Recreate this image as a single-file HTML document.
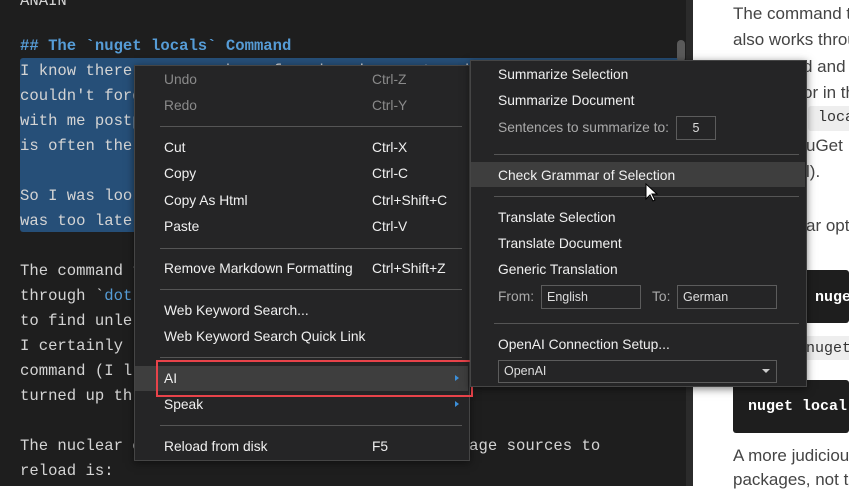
<!DOCTYPE html>
<html><head><meta charset="utf-8"><style>
*{margin:0;padding:0;box-sizing:border-box}
body{width:849px;height:486px;overflow:hidden;background:#fff;position:relative;font-family:"Liberation Sans",sans-serif}
#ed{position:absolute;left:0;top:0;width:693px;height:486px;background:#1e1e1e;overflow:hidden}
#track{position:absolute;left:686px;top:0;width:7px;height:486px;background:#2b2b2b}
#thumb{position:absolute;left:677px;top:40px;width:8px;height:22px;background:#5a5a5a;border-radius:4px}
.l{position:absolute;left:20px;font-family:"Liberation Mono",monospace;font-size:15.6px;color:#d4d4d4;white-space:pre;line-height:25px}
.sel{position:absolute;left:20px;top:58px;width:660px;height:174px;background:#264f78;border-radius:3px}
.h{color:#569cd6;font-weight:bold}
.menu{position:absolute;background:#252526;border:1px solid #454545;box-shadow:0 2px 8px rgba(0,0,0,.5)}
.mi{position:absolute;font-size:13.8px;color:#f0f0f0;white-space:nowrap;line-height:16px}
.dis{color:#8a8a8a}
.sep{position:absolute;height:1px;background:#555}
.box{position:absolute;border:1px solid #5c5c5c;font-size:12.5px;color:#ddd;padding-left:5px;line-height:22px}
#pv{position:absolute;left:693px;top:0;width:156px;height:486px;background:#fff}
.p{position:absolute;font-size:17px;color:#444;white-space:nowrap;line-height:20px}
</style></head><body>
<div id="ed">
<div class="sel"></div>
<div class="l" style="top:-11px">ANAIN</div>
<div class="l h" style="top:34px">## The `nuget locals` Command</div>
<div class="l" style="top:59px">I know there are a number of caches in nuget and I</div>
<div class="l" style="top:84px">couldn't forget the folder name to clear them</div>
<div class="l" style="top:109px">with me postposting this here as a reminder since it</div>
<div class="l" style="top:134px">is often the thing that I need when all else fails.</div>
<div class="l" style="top:184px">So I was looking for a command to clear caches but it</div>
<div class="l" style="top:209px">was too late</div>
<div class="l" style="top:259px">The command t</div>
<div class="l" style="top:284px">through `<span style="color:#569cd6">dot</span></div>
<div class="l" style="top:309px">to find unle</div>
<div class="l" style="top:334px">I certainly </div>
<div class="l" style="top:359px">command (I l</div>
<div class="l" style="top:384px">turned up th</div>
<div class="l" style="top:434px">The nuclear option to clears all caches and package sources to</div>
<div class="l" style="top:459px">reload is:</div>
<div id="track"></div><div id="thumb"></div>
</div>
<div id="pv"></div>
<div class="p" style="top:4px;left:733px">The command that</div>
<div class="p" style="top:30px;left:733px">also works through</div>
<div class="p" style="top:57px;left:803px">d and</div>
<div class="p" style="top:83px;left:803px">or in the</div>
<div style="position:absolute;left:808px;top:106px;width:45px;height:25px;background:#eee;border-radius:3px"></div>
<div class="p" style="top:108px;left:818px;font-family:'Liberation Mono',monospace;font-size:15px;color:#333">loca</div>
<div class="p" style="top:136px;left:806px">uGet</div>
<div class="p" style="top:162px;left:806px">l).</div>
<div class="p" style="top:216px;left:806px">ar opt</div>
<div style="position:absolute;left:733px;top:270px;width:116px;height:53px;background:#1e1e1e;border-radius:3px"></div>
<div class="p" style="top:288px;left:815px;font-family:'Liberation Mono',monospace;color:#fff;font-weight:bold;font-size:15px">nuget</div>
<div style="position:absolute;left:800px;top:336px;width:49px;height:24px;background:#eee"></div>
<div class="p" style="top:339px;left:806px;font-family:'Liberation Mono',monospace;font-size:15px;color:#333">nuget</div>
<div style="position:absolute;left:733px;top:380px;width:116px;height:53px;background:#1e1e1e;border-radius:3px"></div>
<div class="p" style="top:397px;left:748px;font-family:'Liberation Mono',monospace;color:#fff;font-weight:bold;font-size:15px">nuget local</div>
<div class="p" style="top:446px;left:733px">A more judicious</div>
<div class="p" style="top:470px;left:733px">packages, not the</div>

<div class="menu" style="left:134px;top:65px;width:336px;height:396px"></div>
<div style="position:absolute;left:135px;top:366px;width:333px;height:25px;background:#3e3e3e"></div>
<div class="mi dis" style="left:164px;top:72px">Undo</div><div class="mi dis" style="left:372px;top:72px">Ctrl-Z</div>
<div class="mi dis" style="left:164px;top:98px">Redo</div><div class="mi dis" style="left:372px;top:98px">Ctrl-Y</div>
<div class="sep" style="left:160px;top:126px;width:302px"></div>
<div class="mi" style="left:164px;top:140px">Cut</div><div class="mi" style="left:372px;top:140px">Ctrl-X</div>
<div class="mi" style="left:164px;top:166px">Copy</div><div class="mi" style="left:372px;top:166px">Ctrl-C</div>
<div class="mi" style="left:164px;top:193px">Copy As Html</div><div class="mi" style="left:372px;top:193px">Ctrl+Shift+C</div>
<div class="mi" style="left:164px;top:219px">Paste</div><div class="mi" style="left:372px;top:219px">Ctrl-V</div>
<div class="sep" style="left:160px;top:248px;width:302px"></div>
<div class="mi" style="left:164px;top:261px">Remove Markdown Formatting</div><div class="mi" style="left:372px;top:261px">Ctrl+Shift+Z</div>
<div class="sep" style="left:160px;top:289px;width:302px"></div>
<div class="mi" style="left:164px;top:303px">Web Keyword Search...</div>
<div class="mi" style="left:164px;top:329px">Web Keyword Search Quick Link</div>
<div class="sep" style="left:160px;top:357px;width:302px"></div>
<div class="mi" style="left:164px;top:371px">AI</div>
<div class="mi" style="left:164px;top:397px">Speak</div>
<svg style="position:absolute;left:454px;top:374px" width="6" height="8"><path d="M1 1L5 4L1 7Z" fill="#3c8fd9"/></svg>
<svg style="position:absolute;left:454px;top:400px" width="6" height="8"><path d="M1 1L5 4L1 7Z" fill="#3c8fd9"/></svg>
<div class="sep" style="left:160px;top:425px;width:302px"></div>
<div class="mi" style="left:164px;top:439px">Reload from disk</div><div class="mi" style="left:372px;top:439px">F5</div>
<div style="position:absolute;left:156px;top:360px;width:317px;height:37px;border:2px solid #e8434a"></div>

<div class="menu" style="left:470px;top:60px;width:337px;height:327px"></div>
<div style="position:absolute;left:471px;top:162px;width:334px;height:25px;background:#3e3e3e"></div>
<div class="mi" style="left:498px;top:67px">Summarize Selection</div>
<div class="mi" style="left:498px;top:93px">Summarize Document</div>
<div class="mi dis" style="left:498px;top:120px;color:#aaa">Sentences to summarize to:</div>
<div class="box" style="left:676px;top:116px;width:40px;height:24px;text-align:center;padding:0">5</div>
<div class="sep" style="left:494px;top:154px;width:305px"></div>
<div class="mi" style="left:498px;top:168px">Check Grammar of Selection</div>
<div class="sep" style="left:494px;top:196px;width:305px"></div>
<div class="mi" style="left:498px;top:210px">Translate Selection</div>
<div class="mi" style="left:498px;top:236px">Translate Document</div>
<div class="mi" style="left:498px;top:262px">Generic Translation</div>
<div class="mi" style="left:498px;top:289px;color:#aaa">From:</div>
<div class="box" style="left:541px;top:285px;width:100px;height:24px">English</div>
<div class="mi" style="left:652px;top:289px;color:#aaa">To:</div>
<div class="box" style="left:677px;top:285px;width:100px;height:24px">German</div>
<div class="sep" style="left:494px;top:323px;width:305px"></div>
<div class="mi" style="left:498px;top:337px">OpenAI Connection Setup...</div>
<div class="box" style="left:498px;top:360px;width:279px;height:23px;line-height:21px">OpenAI</div>
<svg style="position:absolute;left:762px;top:369px" width="8" height="5"><path d="M0 0H8L4 4Z" fill="#ccc"/></svg>
<svg style="position:absolute;left:645px;top:183px" width="14" height="20"><path d="M1 1V16L5 12L8 18L10 17L7 11H12Z" fill="#fff" stroke="#000" stroke-width="1"/></svg>
</body></html>
